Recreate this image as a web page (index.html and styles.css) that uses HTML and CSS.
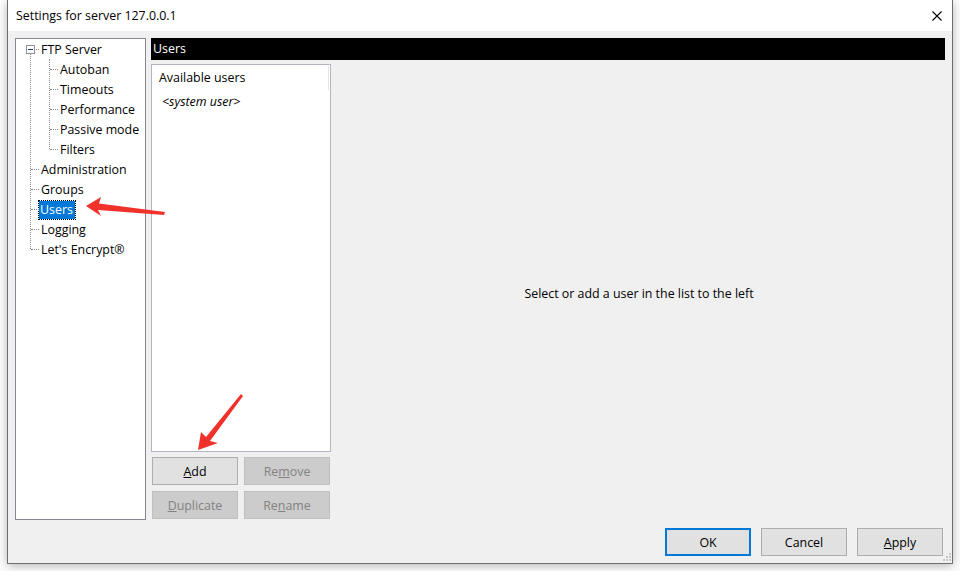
FILE: index.html
```html
<!DOCTYPE html>
<html lang="en">
<head>
    <meta charset="UTF-8">
    <title>Settings for server 127.0.0.1</title>
    <link rel="stylesheet" href="styles.css">
</head>
<body>
    <div class="window">
        <div class="titlebar">
            <span class="title">Settings for server 127.0.0.1</span>
            <svg class="close" width="10" height="10" viewBox="0 0 10 10">
                <path d="M0.5 0.5 L9.5 9.5 M9.5 0.5 L0.5 9.5" stroke="#000" stroke-width="1.1" fill="none"/>
            </svg>
        </div>

        <div class="main">
            <div class="tree">
                <ul class="tree-root">
                    <li class="tree-node">
                        <div class="row"><span class="toggle"></span>FTP Server</div>
                        <ul class="tree-children">
                            <li class="row">Autoban</li>
                            <li class="row">Timeouts</li>
                            <li class="row">Performance</li>
                            <li class="row">Passive mode</li>
                            <li class="row">Filters</li>
                        </ul>
                    </li>
                    <li class="row">Administration</li>
                    <li class="row">Groups</li>
                    <li class="row"><span class="selected">Users</span></li>
                    <li class="row">Logging</li>
                    <li class="row">Let's Encrypt®</li>
                </ul>
            </div>

            <div class="pane">
                <div class="pane-header">Users</div>
                <div class="pane-body">
                    <div class="user-column">
                        <div class="user-list">
                            <div class="list-header">Available users</div>
                            <div class="list-item system">&lt;system user&gt;</div>
                        </div>
                        <div class="list-buttons">
                            <button class="btn"><u>A</u>dd</button>
                            <button class="btn" disabled>Re<u>m</u>ove</button>
                            <button class="btn" disabled><u>D</u>uplicate</button>
                            <button class="btn" disabled>Re<u>n</u>ame</button>
                        </div>
                    </div>
                    <div class="empty-msg">Select or add a user in the list to the left</div>
                </div>
            </div>
        </div>

        <div class="footer">
            <button class="btn default">OK</button>
            <button class="btn">Cancel</button>
            <button class="btn"><u>A</u>pply</button>
            <svg class="grip" width="8" height="8" viewBox="0 0 8 8">
                <rect x="6" y="0" width="2" height="2" fill="#c8c8c8"/>
                <rect x="3" y="3" width="2" height="2" fill="#c8c8c8"/>
                <rect x="6" y="3" width="2" height="2" fill="#c8c8c8"/>
                <rect x="0" y="6" width="2" height="2" fill="#c8c8c8"/>
                <rect x="3" y="6" width="2" height="2" fill="#c8c8c8"/>
                <rect x="6" y="6" width="2" height="2" fill="#c8c8c8"/>
            </svg>
        </div>
    </div>

    <!-- red annotation arrows -->
    <svg class="annotations" width="960" height="571" viewBox="0 0 960 571">
        <polygon points="86,206 101,197 99,203.5 165,212 164,215 98,210 101,216" fill="#f0322b"/>
        <polygon points="198,450 201,432 206,437 241,394 243,396 210,441 218,443" fill="#f0322b"/>
    </svg>
</body>
</html>
```

FILE: styles.css
```css
* {
    margin: 0;
    padding: 0;
    box-sizing: border-box;
}

body {
    width: 960px;
    height: 571px;
    overflow: hidden;
    background: #fff;
    font-family: "Open Sans", "Noto Sans", sans-serif;
    font-size: 12.4px;
    color: #000;
}

.window {
    position: relative;
    margin-left: 7px;
    width: 946px;
    height: 564px;
    background: #f0f0f0;
    border: 1px solid #6e6e6e;
    border-top: none;
    box-shadow: 0 2px 10px rgba(0,0,0,0.3);
    display: flex;
    flex-direction: column;
}

.titlebar {
    height: 31px;
    background: #fff;
    display: flex;
    align-items: center;
    justify-content: space-between;
    padding: 0 10px 0 8px;
}

.title {
    font-size: 12.4px;
}

.close {
    display: block;
}

.main {
    display: flex;
    gap: 5px;
    padding: 7px 7px 0 7px;
    height: 489px;
}

/* tree */
.tree {
    width: 131px;
    height: 482px;
    background: #fff;
    border: 1px solid #828790;
}

.tree ul {
    list-style: none;
}

.tree-root {
    position: relative;
}

.tree-root::before {
    content: "";
    position: absolute;
    left: 14px;
    top: 15px;
    bottom: 10px;
    border-left: 1px dotted #8a8a8a;
}

.row {
    position: relative;
    height: 20px;
    line-height: 22px;
    padding-left: 25px;
    white-space: nowrap;
}

.row::before {
    content: "";
    position: absolute;
    left: 15px;
    top: 10px;
    width: 8px;
    border-top: 1px dotted #8a8a8a;
}

.tree-children {
    position: relative;
}

.tree-children::before {
    content: "";
    position: absolute;
    left: 33px;
    top: 0;
    bottom: 10px;
    border-left: 1px dotted #8a8a8a;
}

.tree-children .row {
    padding-left: 44px;
}

.tree-children .row::before {
    left: 34px;
}

.toggle {
    position: absolute;
    left: 10px;
    top: 6px;
    width: 9px;
    height: 9px;
    border: 1px solid #919191;
    background: #fff;
    z-index: 1;
}

.toggle::after {
    content: "";
    position: absolute;
    left: 1px;
    top: 3px;
    width: 5px;
    height: 1px;
    background: #1f3a66;
}

.selected {
    display: inline-block;
    line-height: 18px;
    padding: 0 2px 0 1px;
    margin-left: -2px;
    background: #0078d7;
    color: #fff;
    outline: 1px dotted #000;
}

/* right pane */
.pane {
    flex: 1;
    display: flex;
    flex-direction: column;
}

.pane-header {
    height: 22px;
    line-height: 21px;
    padding-left: 2px;
    background: #000;
    color: #fff;
}

.pane-body {
    flex: 1;
    display: flex;
    margin-top: 4px;
}

.user-column {
    width: 180px;
    display: flex;
    flex-direction: column;
}

.user-list {
    height: 388px;
    padding-top: 1px;
    background: #fff;
    border: 1px solid #b5b5c0;
}

.list-header {
    height: 24px;
    line-height: 24px;
    padding-left: 7px;
    border-right: 1px solid #e5e5e5;
    margin-right: 1px;
}

.list-item {
    height: 24px;
    line-height: 24px;
    padding-left: 10px;
}

.system {
    font-style: italic;
}

.list-buttons {
    display: grid;
    grid-template-columns: 86px 86px;
    gap: 6px;
    margin-top: 5px;
    padding-left: 1px;
}

.btn {
    height: 28px;
    width: 86px;
    background: #e1e1e1;
    border: 1px solid #adadad;
    font-family: inherit;
    font-size: 12.4px;
    color: #000;
}

.btn:disabled {
    background: #cccccc;
    border-color: #bfbfbf;
    color: #838383;
}

.btn.default {
    border: 2px solid #0078d7;
}

.empty-msg {
    flex: 1;
    display: flex;
    align-items: center;
    justify-content: center;
    padding: 3px 0 0 2px;
}

/* footer */
.footer {
    display: flex;
    justify-content: flex-end;
    gap: 10px;
    padding: 8px 9px 0 0;
}

.grip {
    position: absolute;
    right: 1px;
    bottom: 2px;
}

.annotations {
    position: absolute;
    left: 0;
    top: 0;
    pointer-events: none;
}
```
